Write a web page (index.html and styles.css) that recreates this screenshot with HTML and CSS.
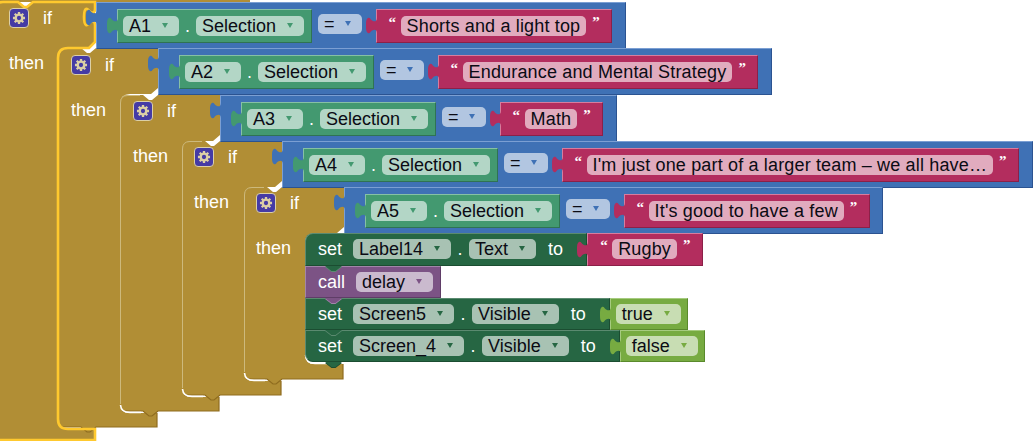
FILE: index.html
```html
<!DOCTYPE html>
<html lang="en">
<head>
    <meta charset="UTF-8">
    <meta name="viewport" content="width=device-width, initial-scale=1.0">
    <title>Blocks</title>
    <link rel="stylesheet" href="styles.css">
</head>
<body>
    <svg class="defs" width="0" height="0">
        <symbol id="tab" viewBox="0 0 11 18" preserveAspectRatio="none">
            <path d="M11 0V1C11 5 8.500 5 6.500 4C4.500 3 4 0 2 1C0 2 0 6 0 9C0 12 0 16 2 17C4 18 4.500 15 6.500 14C8.500 13 11 13 11 17V18Z"/>
        </symbol>
        <symbol id="gear" viewBox="0 0 18 18">
            <g stroke="#dcd0a6" stroke-width="2.6">
                <path d="M9 2.200V15.800M2.200 9H15.800M4.200 4.200L13.800 13.800M13.800 4.200L4.200 13.800"/>
            </g>
            <circle cx="9" cy="9" r="5" fill="#dcd0a6"/>
            <circle cx="9" cy="9" r="2.400" fill="#453ba5"/>
        </symbol>
    </svg>

    <div class="canvas">
        <!-- mustard if blocks, outermost first -->
        <svg class="shapes" width="1035" height="441">
            <rect class="fill" x="0" y="0" width="250" height="2"/>
            <path class="fill" d="M-5 10Q-5 2 3 2H18l6 5h3l6-5H95V42L89 48H68Q58 48 58 58V419Q58 429 68 429H95V440H-5Z"/>
            <path class="fill" d="M58 56Q58 48 66 48H81l6 5h3l6-5H158V88L151 94H130Q120 94 120 104V403Q120 413 130 413H157V427H96l-6 5h-3l-6-5H58Z"/>
            <path class="fill" d="M120 103Q120 95 128 95H143l6 5h3l6-5H220V135L213 141H192Q182 141 182 151V387Q182 397 192 397H219V411H158l-6 5h-3l-6-5H120Z"/>
            <path class="fill" d="M182 149Q182 141 190 141H205l6 5h3l6-5H282V181L275 187H254Q244 187 244 197V371Q244 381 254 381H281V395H220l-6 5h-3l-6-5H182Z"/>
            <path class="fill" d="M244 195Q244 187 252 187H267l6 5h3l6-5H344V227L337 233H315Q305 233 305 243V354Q305 364 315 364H343V379H282l-6 5h-3l-6-5H244Z"/>

            <path class="lo" d="M157 413V427H96l-6 5h-3l-6-5H60"/>
            <path class="lo" d="M219 397V411H158l-6 5h-3l-6-5H122"/>
            <path class="lo" d="M281 381V395H220l-6 5h-3l-6-5H184"/>
            <path class="lo" d="M343 364V379H282l-6 5h-3l-6-5H246"/>

            <path class="hi" d="M120.500 404V103Q120.500 95.500 128 95.500H140"/>
            <path class="hi" d="M182.500 388V149Q182.500 141.500 190 141.500H202"/>
            <path class="hi" d="M244.500 372V195Q244.500 187.500 252 187.500H264"/>

            <path class="gap" d="M120.500 405Q121 412.500 130 412.500H141"/>
            <path class="gap" d="M182.500 389Q183 396.500 192 396.500H203"/>
            <path class="gap" d="M244.500 373Q245 380.500 254 380.500H265"/>
            <path class="gap" d="M305.500 355Q306 363.500 315 363.500H327"/>

            <path class="selected" d="M-5 10Q-5 2 3 2H18l6 5h3l6-5H95V8v1c0 4-3 4-4.500 3c-2-1-2.500-4-4.500-3c-2 1-2 5-2 8c0 3 0 7 2 8c2 1 2.500-2 4.500-3c1.500-1 4.500-1 4.500 3v1V42L89 48H68Q58 48 58 58V419Q58 429 68 429H95V440H-5Z"/>
        </svg>

        <div class="if-block ib1">
            <div class="if-head"><span class="gear"><svg width="16" height="16"><use href="#gear"/></svg></span><span class="word">if</span></div>
            <div class="word then">then</div>
        </div>
        <div class="if-block ib2">
            <div class="if-head"><span class="gear"><svg width="16" height="16"><use href="#gear"/></svg></span><span class="word">if</span></div>
            <div class="word then">then</div>
        </div>
        <div class="if-block ib3">
            <div class="if-head"><span class="gear"><svg width="16" height="16"><use href="#gear"/></svg></span><span class="word">if</span></div>
            <div class="word then">then</div>
        </div>
        <div class="if-block ib4">
            <div class="if-head"><span class="gear"><svg width="16" height="16"><use href="#gear"/></svg></span><span class="word">if</span></div>
            <div class="word then">then</div>
        </div>
        <div class="if-block ib5">
            <div class="if-head"><span class="gear"><svg width="16" height="16"><use href="#gear"/></svg></span><span class="word">if</span></div>
            <div class="word then">then</div>
        </div>

        <!-- compare blocks -->
        <div class="logic r1">
            <svg class="tab"><use href="#tab"/></svg>
            <div class="get"><svg class="tab"><use href="#tab"/></svg><span class="pill dd">A1</span><span class="dot">.</span><span class="pill dd">Selection</span></div>
            <span class="pill dd op">=</span>
            <div class="text"><svg class="tab"><use href="#tab"/></svg><span class="q">“</span><span class="pill">Shorts and a light top</span><span class="q end">”</span></div>
        </div>
        <div class="logic r2">
            <svg class="tab"><use href="#tab"/></svg>
            <div class="get"><svg class="tab"><use href="#tab"/></svg><span class="pill dd">A2</span><span class="dot">.</span><span class="pill dd">Selection</span></div>
            <span class="pill dd op">=</span>
            <div class="text"><svg class="tab"><use href="#tab"/></svg><span class="q">“</span><span class="pill">Endurance and Mental Strategy</span><span class="q end">”</span></div>
        </div>
        <div class="logic r3">
            <svg class="tab"><use href="#tab"/></svg>
            <div class="get"><svg class="tab"><use href="#tab"/></svg><span class="pill dd">A3</span><span class="dot">.</span><span class="pill dd">Selection</span></div>
            <span class="pill dd op">=</span>
            <div class="text"><svg class="tab"><use href="#tab"/></svg><span class="q">“</span><span class="pill">Math</span><span class="q end">”</span></div>
        </div>
        <div class="logic r4">
            <svg class="tab"><use href="#tab"/></svg>
            <div class="get"><svg class="tab"><use href="#tab"/></svg><span class="pill dd">A4</span><span class="dot">.</span><span class="pill dd">Selection</span></div>
            <span class="pill dd op">=</span>
            <div class="text"><svg class="tab"><use href="#tab"/></svg><span class="q">“</span><span class="pill">I'm just one part of a larger team – we all have…</span><span class="q end">”</span></div>
        </div>
        <div class="logic r5">
            <svg class="tab"><use href="#tab"/></svg>
            <div class="get"><svg class="tab"><use href="#tab"/></svg><span class="pill dd">A5</span><span class="dot">.</span><span class="pill dd">Selection</span></div>
            <span class="pill dd op">=</span>
            <div class="text"><svg class="tab"><use href="#tab"/></svg><span class="q">“</span><span class="pill">It's good to have a few</span><span class="q end">”</span></div>
        </div>

        <!-- statements inside the last then -->
        <div class="stack">
            <div class="line">
                <div class="stmt setter"><span class="word">set</span><span class="pill dd">Label14</span><span class="dot">.</span><span class="pill dd">Text</span><span class="word to">to</span></div>
                <div class="text"><svg class="tab"><use href="#tab"/></svg><span class="q">“</span><span class="pill">Rugby</span><span class="q end">”</span></div>
            </div>
            <div class="line">
                <div class="stmt caller"><span class="word">call</span><span class="pill dd">delay</span></div>
            </div>
            <div class="line">
                <div class="stmt setter"><span class="word">set</span><span class="pill dd">Screen5</span><span class="dot">.</span><span class="pill dd">Visible</span><span class="word to">to</span></div>
                <div class="bool"><svg class="tab"><use href="#tab"/></svg><span class="pill dd">true</span></div>
            </div>
            <div class="line">
                <div class="stmt setter"><span class="word">set</span><span class="pill dd">Screen_4</span><span class="dot">.</span><span class="pill dd">Visible</span><span class="word to">to</span></div>
                <div class="bool"><svg class="tab"><use href="#tab"/></svg><span class="pill dd">false</span></div>
            </div>
        </div>
    </div>
</body>
</html>
```

FILE: styles.css
```css
body {
    margin: 0;
    background-color: #fff;
    font-family: "Liberation Sans", Arial, sans-serif;
    font-size: 18px;
}
.defs {
    position: absolute;
}
.canvas {
    position: relative;
    width: 1035px;
    height: 441px;
    overflow: hidden;
}
.shapes {
    position: absolute;
    left: 0;
    top: 0;
}
.fill {
    fill: #b18e35;
}
.lo, .hi, .gap, .selected {
    fill: none;
}
.lo {
    stroke: #8f6c1f;
    stroke-width: 1.2;
}
.hi {
    stroke: #cdb97c;
    stroke-width: 1;
}
.gap {
    stroke: #fff;
    stroke-width: 1.6;
}
.selected {
    stroke: #ffc92e;
    stroke-width: 2.6;
}

/* if labels */
.if-block {
    position: absolute;
    display: flex;
    flex-direction: column;
}
.ib1 { left: 9px; top: 8px; }
.ib2 { left: 71px; top: 55px; }
.ib3 { left: 133px; top: 101px; }
.ib4 { left: 194px; top: 147px; }
.ib5 { left: 256px; top: 193px; }
.if-head {
    display: flex;
    align-items: center;
    gap: 14px;
    height: 20px;
}
.gear {
    display: flex;
    align-items: center;
    justify-content: center;
    box-sizing: border-box;
    width: 20px;
    height: 20px;
    background-color: #453ba5;
    border: 1px solid #dcd0a6;
    border-radius: 4px;
}
.word {
    color: #fff;
    line-height: 20px;
}
.then {
    margin-top: 25px;
}

/* shared block parts */
.logic, .get, .text, .bool, .stmt {
    position: relative;
    box-sizing: border-box;
    display: flex;
    border-style: solid;
    border-width: 1px;
    border-color: var(--hi) var(--lo) var(--lo) var(--hi);
    background-color: var(--fill);
}
.tab {
    position: absolute;
    left: -11px;
    top: 7px;
    width: 11px;
    height: 17px;
    fill: var(--fill);
}
.logic > .tab {
    top: 6px;
}
.pill {
    position: relative;
    height: 20px;
    padding: 0 6px;
    line-height: 20px;
    color: #0b0b14;
    background-color: rgba(255, 255, 255, 0.6);
    border-radius: 5px;
    white-space: nowrap;
}
.text .pill {
    letter-spacing: 0.16px;
}
.dd {
    padding-right: 28px;
}
.dd::after {
    content: "";
    position: absolute;
    right: 11px;
    top: 7px;
    border-left: 3.5px solid transparent;
    border-right: 3.5px solid transparent;
    border-top: 5.5px solid var(--fill);
}
.dot {
    width: 17px;
    text-align: center;
    color: #fff;
    line-height: 20px;
}
.stmt .dot {
    width: 18px;
}
.q {
    width: 6px;
    height: 20px;
    margin: 0 6px 0 12px;
    font-family: "Liberation Serif", serif;
    font-weight: bold;
    font-size: 15px;
    line-height: 13px;
    color: #fff;
}
.q.end {
    margin: 0 13px 0 6px;
}

/* blue compare rows */
.logic {
    --fill: #3f71b5;
    --hi: #7b9fd3;
    --lo: #2b5391;
    position: absolute;
    height: 47px;
    padding: 6px 12.5px 0 20px;
}
.r1 { left: 96px; top: 2px; }
.r2 { left: 158px; top: 48px; }
.r3 { left: 220px; top: 95px; }
.r4 { left: 282px; top: 141px; }
.r5 { left: 344px; top: 187px; }
.get {
    --fill: #439970;
    --hi: #86c0a5;
    --lo: #2f7353;
    height: 34px;
    padding: 6px 7px 0 5px;
    margin-right: 6px;
}
.text {
    --fill: #b32d5e;
    --hi: #d67d9e;
    --lo: #8c2048;
    height: 34px;
    padding-top: 6px;
}
.op {
    margin: 5px 14px 0 0;
    padding-right: 27px;
}

/* statements */
.stack {
    position: absolute;
    left: 305px;
    top: 233px;
    display: flex;
    flex-direction: column;
    align-items: flex-start;
}
.line {
    position: relative;
    display: flex;
}
.line:nth-child(1) { z-index: 4; }
.line:nth-child(2) { z-index: 3; }
.line:nth-child(3) { z-index: 2; }
.line:nth-child(4) { z-index: 1; }
.line .text, .bool {
    height: 32px;
    padding-top: 5px;
}
.stmt {
    align-items: flex-start;
    height: 32px;
    padding: 5px 0 0 12px;
}
.line:first-child .stmt, .line:first-child .text {
    height: 33px;
}
.stmt .word:first-child {
    margin-right: 11px;
}
.setter {
    --fill: #266643;
    --hi: #5b8a70;
    --lo: #1b4d31;
    padding-right: 23px;
}
.caller {
    --fill: #7c5385;
    --hi: #a285a9;
    --lo: #5f3d67;
    padding-right: 7px;
}
.to {
    margin-left: 12px;
}
.bool {
    --fill: #77ab41;
    --hi: #a6cb7f;
    --lo: #5a8a2c;
    padding-left: 5px;
    padding-right: 6px;
}
.stmt::before, .stmt::after {
    content: "";
    position: absolute;
    left: 19px;
    width: 17px;
    height: 5px;
    clip-path: polygon(0 0, 100% 0, 62% 100%, 38% 100%);
}
.stmt::before {
    bottom: -7px;
    background-color: var(--hi);
}
.stmt::after {
    bottom: -6px;
    background-color: var(--fill);
}
.line:first-child .stmt {
    border-top-left-radius: 8px;
}
.line:last-child .stmt {
    border-bottom-left-radius: 8px;
}
.line:last-child .stmt::before {
    background-color: var(--lo);
}
```
